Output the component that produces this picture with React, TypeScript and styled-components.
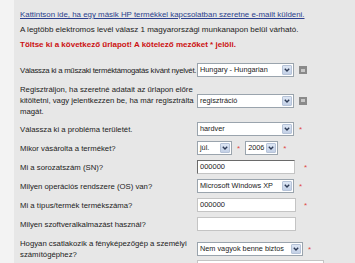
import React from "react";
import styled, { createGlobalStyle } from "styled-components";

const Global = createGlobalStyle`
  html, body { margin: 0; padding: 0; background: #f3f3f3; }
  body { font-family: "Liberation Sans", Arial, sans-serif; }
`;

const Page = styled.div`
  display: flex;
  padding-left: 14px;
  height: 263px;
  overflow: hidden;
`;

const Panel = styled.div`
  flex: 1;
  background: #e7e7e7;
  padding: 9px 0 0 6px;
  font-size: 8px;
  color: #222;
`;

const IntroLine = styled.div<{ $tone?: "link" | "warn" }>`
  height: 15px;
  line-height: 12px;
  white-space: nowrap;
  font-size: ${(p) => (p.$tone === "link" ? "7.9px" : "8px")};
  color: ${(p) => (p.$tone === "link" ? "#2b3f8e" : p.$tone === "warn" ? "#cc1111" : "#222")};
  font-weight: ${(p) => (p.$tone === "warn" ? "bold" : "normal")};
  text-decoration: ${(p) => (p.$tone === "link" ? "underline" : "none")};
`;

const Form = styled.div`
  display: grid;
  grid-template-columns: 177px 1fr;
  row-gap: 5px;
  margin-top: 9px;
  align-items: center;
`;

const Label = styled.div<{ $shift?: number; $tight?: boolean }>`
  font-size: 7.75px;
  line-height: 11px;
  margin-top: ${(p) => p.$shift ?? 0}px;
  white-space: ${(p) => (p.$tight ? "nowrap" : "normal")};
  letter-spacing: ${(p) => (p.$tight ? "-0.26px" : "normal")};
`;

const Cell = styled.div<{ $shift?: number }>`
  display: flex;
  align-items: center;
  gap: 5px;
  margin-top: ${(p) => p.$shift ?? 0}px;
`;

const SelectBox = styled.div<{ $w: number }>`
  flex: 0 0 ${(p) => p.$w}px;
  width: ${(p) => p.$w}px;
  max-width: ${(p) => p.$w}px;
  height: 14px;
  box-sizing: border-box;
  border: 1px solid #9aa4ad;
  background: #fff;
  display: flex;
  align-items: stretch;
  overflow: hidden;
`;

const SelectText = styled.span`
  flex: 1 1 0;
  width: 0;
  min-width: 0;
  padding-left: 2px;
  font-size: 7.3px;
  line-height: 12px;
  white-space: nowrap;
  overflow: hidden;
`;

const Arrow = styled.span`
  flex: 0 0 auto;
  width: 8px;
  margin: 1px;
  background: linear-gradient(#dde6f4, #c3d0e6);
  border: 1px solid #b6c3d8;
  border-radius: 1px;
  display: flex;
  align-items: center;
  justify-content: center;
`;

const TextBox = styled.div<{ $w: number; $inset?: boolean }>`
  flex: 0 0 ${(p) => p.$w}px;
  width: ${(p) => p.$w}px;
  height: 14px;
  box-sizing: border-box;
  background: #fff;
  border: 1px solid #c4c4c4;
  border-top-color: ${(p) => (p.$inset ? "#6a6a6a" : "#c4c4c4")};
  border-left-color: ${(p) => (p.$inset ? "#6a6a6a" : "#c4c4c4")};
  padding-left: 2px;
  font-size: 7.5px;
  line-height: 12px;
`;

const Star = styled.span<{ $pad?: number }>`
  color: #e04848;
  font-size: 8px;
  padding-left: ${(p) => p.$pad ?? 0}px;
`;

const Help = styled.span`
  width: 8px;
  height: 8px;
  background: #8a8a8a;
  display: flex;
  align-items: center;
  justify-content: center;
  &::after {
    content: "";
    width: 4px;
    height: 3px;
    background: #c8c8c8;
  }
`;

const Chevron = () => (
  <svg width="6" height="4" viewBox="0 0 6 4">
    <path d="M0.8 0.8 L3 3 L5.2 0.8" fill="none" stroke="#2d3a55" strokeWidth="1.4" />
  </svg>
);

const Select = ({ w, children }: { w: number; children: React.ReactNode }) => (
  <SelectBox $w={w}>
    <SelectText>{children}</SelectText>
    <Arrow>
      <Chevron />
    </Arrow>
  </SelectBox>
);

export default function App() {
  return (
    <>
      <Global />
      <Page>
        <Panel>
          <IntroLine $tone="link">Kattintson ide, ha egy másik HP termékkel kapcsolatban szeretne e-mailt küldeni.</IntroLine>
          <IntroLine>A legtöbb elektromos levél válasz 1 magyarországi munkanapon belül várható.</IntroLine>
          <IntroLine $tone="warn">Töltse ki a következő űrlapot! A kötelező mezőket * jelöli.</IntroLine>
          <Form>
            <Label $tight>Válassza ki a műszaki terméktámogatás kívánt nyelvét.</Label>
            <Cell>
              <Select w={97}>Hungary - Hungarian</Select>
              <Help />
            </Cell>

            <Label $shift={2}>Regisztráljon, ha szeretné adatait az űrlapon előre kitöltetni, vagy jelentkezzen be, ha már regisztrálta magát.</Label>
            <Cell $shift={2}>
              <Select w={97}>regisztráció</Select>
              <Help />
            </Cell>

            <Label>Válassza ki a probléma területét.</Label>
            <Cell>
              <Select w={97}>hardver</Select>
              <Star>*</Star>
            </Cell>

            <Label>Mikor vásárolta a terméket?</Label>
            <Cell>
              <Select w={35}>júl.</Select>
              <Star>*</Star>
              <Select w={33}>2006</Select>
              <Star>*</Star>
            </Cell>

            <Label>Mi a sorozatszám (SN)?</Label>
            <Cell>
              <TextBox $w={98} $inset>000000</TextBox>
              <Star $pad={4}>*</Star>
            </Cell>

            <Label>Milyen operációs rendszere (OS) van?</Label>
            <Cell>
              <Select w={97}>Microsoft Windows XP</Select>
              <Star>*</Star>
            </Cell>

            <Label>Mi a típus/termék termékszáma?</Label>
            <Cell>
              <TextBox $w={99}>000000</TextBox>
              <Star $pad={3}>*</Star>
            </Cell>

            <Label>Milyen szoftveralkalmazást használ?</Label>
            <Cell>
              <TextBox $w={99} />
            </Cell>

            <Label $shift={2}>Hogyan csatlakozik a fényképezőgép a személyi számítógéphez?</Label>
            <Cell $shift={2}>
              <Select w={106}>Nem vagyok benne biztos</Select>
              <Star>*</Star>
            </Cell>

            <Label />
            <Cell $shift={-5}>
              <TextBox $w={127} />
            </Cell>
          </Form>
        </Panel>
      </Page>
    </>
  );
}
